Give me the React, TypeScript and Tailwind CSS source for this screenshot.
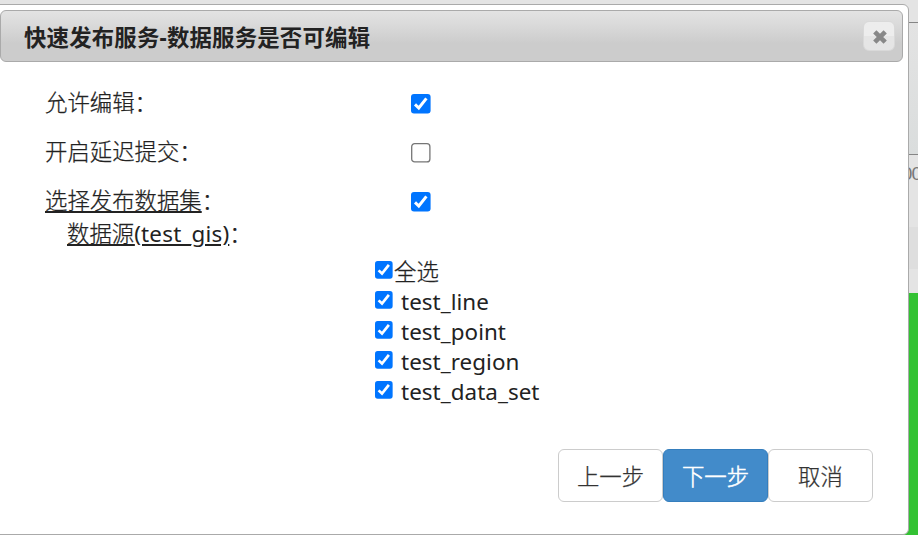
import { useState } from "react";

const datasets = ["test_line", "test_point", "test_region", "test_data_set"];

type CheckProps = {
  checked: boolean;
  onChange: () => void;
  className: string;
  label: string;
};

function Check({ checked, onChange, className, label }: CheckProps) {
  return (
    <button
      type="button"
      role="checkbox"
      aria-checked={checked}
      aria-label={label}
      onClick={onChange}
      className={`block shrink-0 ${className}`}
    >
      <svg viewBox="0 0 20 20" className="block h-full w-full">
        {checked ? (
          <>
            <rect x="0" y="0" width="19.6" height="19.6" rx="3" fill="#0075ff" />
            <path
              d="M4 10.4 L7.8 14 L15.4 4.4"
              fill="none"
              stroke="#fff"
              strokeWidth="3"
            />
          </>
        ) : (
          <rect x="0.7" y="0.7" width="18.2" height="18.2" rx="3" fill="#fff" stroke="#767676" strokeWidth="1.3" />
        )}
      </svg>
    </button>
  );
}

function Backdrop() {
  return (
    <div className="flex h-full flex-col bg-[#e4e4e4]">
      <div className="h-[22px]" />
      <div className="h-[133px] border-y border-[#858585] bg-gradient-to-b from-[#e3e3e3] to-[#dadddd]" />
      <div className="flex h-[72px] justify-end overflow-hidden">
        <span className="-mr-[3px] mt-[7px] font-['Liberation_Sans'] text-[19px] leading-[24px] tracking-[-1px] text-[#777] [-webkit-text-stroke-width:0]">00</span>
      </div>
      <div className="h-[42px] bg-[#dedede]" />
      <div className="h-6" />
      <div className="flex-1 bg-[#33c233]" />
    </div>
  );
}

export default function App() {
  const [editable, setEditable] = useState(true);
  const [delayed, setDelayed] = useState(false);
  const [publish, setPublish] = useState(true);
  const [selected, setSelected] = useState<string[]>(datasets);

  const allSelected = selected.length === datasets.length;

  const toggle = (name: string) => {
    setSelected((prev) => (prev.includes(name) ? prev.filter((x) => x !== name) : [...prev, name]));
  };

  return (
    <main className="relative h-[535px] w-[918px] overflow-hidden font-['Noto_Sans','Noto_Sans_CJK_SC',sans-serif] text-[22.4px] font-light text-[#222] [-webkit-text-stroke-width:0.25px]">
      <Backdrop />
      <section className="absolute -left-[6px] top-1 flex h-[531px] w-[915px] flex-col rounded-[6px] border border-[#aaa] bg-white p-[5px]">
        <header className="flex h-[52px] shrink-0 items-center justify-between rounded-[6px] border border-[#aaa] bg-[linear-gradient(#e3e3e3_0%,#d9d9d9_30%,#cccccc_65%,#cccccc_100%)] pl-[23px] pr-[7px]">
          <h1 className="pt-[3px] font-bold leading-[30px] tracking-[0.2px] [-webkit-text-stroke-width:0]">快速发布服务-数据服务是否可编辑</h1>
          <button
            aria-label="关闭"
            className="flex h-[30px] w-8 items-center justify-center rounded-[6px] border border-[#d9d9d9] bg-gradient-to-b from-[#ededed] from-50% to-[#e5e5e5] to-50% pl-px pt-px"
          >
            <svg viewBox="0 0 16 16" className="h-4 w-4">
              <path d="M2.8 2.8 L13.2 13.2 M13.2 2.8 L2.8 13.2" stroke="#888" strokeWidth="4.6" />
            </svg>
          </button>
        </header>

        <div className="flex flex-col pl-[45px] pt-[25px]">
          <div className="flex h-[49px] items-start">
            <span className="w-[366px] leading-[32px]">允许编辑：</span>
            <Check label="允许编辑" checked={editable} onChange={() => setEditable(!editable)} className="mt-[7px] h-5 w-5" />
          </div>
          <div className="flex h-[49px] items-start">
            <span className="w-[366px] leading-[32px]">开启延迟提交：</span>
            <Check label="开启延迟提交" checked={delayed} onChange={() => setDelayed(!delayed)} className="mt-[7px] h-5 w-5" />
          </div>
          <div className="flex h-[33px] items-start">
            <span className="w-[366px] leading-[32px]">
              <u>选择发布数据集</u>：
            </span>
            <Check label="选择发布数据集" checked={publish} onChange={() => setPublish(!publish)} className="mt-[7px] h-5 w-5" />
          </div>
          <div className="pl-[22px] leading-[32px]">
            <u>
              数据源<span className="font-normal tracking-[0.2px] [-webkit-text-stroke-width:0]">(test_gis)</span>
            </u>
            ：
          </div>
          <ul className="pl-[330px] pt-[7px]">
            <li className="flex h-[30px] items-start gap-px">
              <Check
                label="全选"
                checked={allSelected}
                onChange={() => setSelected(allSelected ? [] : datasets)}
                className="mt-[4px] h-[18px] w-[18px]"
              />
              <span className="leading-[30px]">全选</span>
            </li>
            {datasets.map((name) => (
              <li key={name} className="flex h-[30px] items-start gap-2">
                <Check
                  label={name}
                  checked={selected.includes(name)}
                  onChange={() => toggle(name)}
                  className="mt-[4px] h-[18px] w-[18px]"
                />
                <span className="font-normal leading-[30px] tracking-[0.05px] [-webkit-text-stroke-width:0]">{name}</span>
              </li>
            ))}
          </ul>
        </div>

        <footer className="mb-[27px] mr-[30px] mt-auto flex justify-end text-[#333]">
          <button className="h-[53px] w-[105px] rounded-[6px] border border-[#ccc] bg-white pt-[3px]">上一步</button>
          <button className="h-[53px] w-[105px] rounded-[6px] border border-[#357ebd] bg-[#428bca] pt-[3px] text-white [-webkit-text-stroke-width:0.5px]">下一步</button>
          <button className="h-[53px] w-[105px] rounded-[6px] border border-[#ccc] bg-white pt-[3px]">取消</button>
        </footer>
      </section>
    </main>
  );
}
